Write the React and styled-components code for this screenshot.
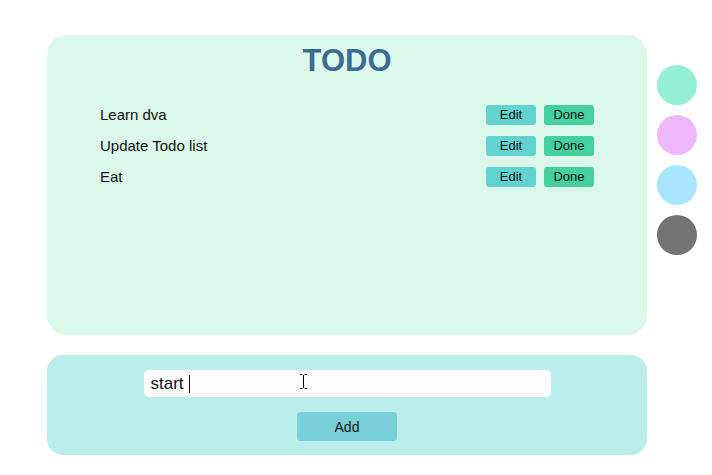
import React from "react";
import styled, { createGlobalStyle } from "styled-components";

const Global = createGlobalStyle`
  html, body { margin: 0; padding: 0; background: #ffffff; }
  body { font-family: "Liberation Sans", Arial, sans-serif; color: #111; }
`;

const Page = styled.div`
  display: flex;
  align-items: flex-start;
  padding: 35px 0 0 47px;
  gap: 10px;
`;

const Main = styled.div`
  display: flex;
  flex-direction: column;
  gap: 20px;
  width: 600px;
`;

const TodoPanel = styled.section`
  box-sizing: border-box;
  height: 300px;
  background: #dcf8eb;
  border-radius: 20px;
  padding: 6px 53px 0;
`;

const Title = styled.h1`
  margin: 0;
  text-align: center;
  font-size: 31px;
  line-height: 40px;
  font-weight: 700;
  color: #3d6a91;
`;

const List = styled.ul`
  list-style: none;
  margin: 18px 0 0;
  padding: 0;
`;

const Row = styled.li`
  display: flex;
  align-items: center;
  height: 31px;
  font-size: 15px;
`;

const Label = styled.span`
  flex: 1;
`;

const Actions = styled.div`
  display: flex;
  gap: 8px;
`;

const SmallButton = styled.button`
  width: 50px;
  height: 20px;
  border: none;
  border-radius: 3px;
  padding: 0;
  font-family: "Liberation Sans", Arial, sans-serif;
  font-size: 13px;
  color: #111;
  background: ${(p) => (p.$kind === "done" ? "#45d09e" : "#62d3cf")};
`;

const InputPanel = styled.section`
  box-sizing: border-box;
  height: 100px;
  background: #bbedea;
  border-radius: 16px;
  padding-top: 15px;
  display: flex;
  flex-direction: column;
  align-items: center;
  gap: 15px;
`;

const Field = styled.div`
  position: relative;
  box-sizing: border-box;
  width: 407px;
  height: 27px;
  background: #ffffff;
  border-radius: 5px;
  padding-left: 7px;
  display: flex;
  align-items: center;
  font-size: 17px;
  color: #111;
`;

const Caret = styled.span`
  display: inline-block;
  width: 1px;
  height: 18px;
  background: #111;
  margin-left: 5px;
`;

const Pointer = styled.svg`
  position: absolute;
  left: 155px;
  top: 3px;
`;

const AddButton = styled.button`
  width: 100px;
  height: 29px;
  border: none;
  border-radius: 4px;
  background: #79d0da;
  font-family: "Liberation Sans", Arial, sans-serif;
  font-size: 14px;
  color: #111;
  padding: 0;
`;

const Swatches = styled.div`
  display: flex;
  flex-direction: column;
  gap: 10px;
  margin-top: 30px;
`;

const Swatch = styled.div`
  width: 40px;
  height: 40px;
  border-radius: 50%;
  background: ${(p) => p.$color};
`;

const todos = ["Learn dva", "Update Todo list", "Eat"];
const colors = ["#95efd2", "#edb8fc", "#a9e6fd", "#737373"];

export default function App() {
  return (
    <>
      <Global />
      <Page>
        <Main>
          <TodoPanel>
            <Title>TODO</Title>
            <List>
              {todos.map((t) => (
                <Row key={t}>
                  <Label>{t}</Label>
                  <Actions>
                    <SmallButton>Edit</SmallButton>
                    <SmallButton $kind="done">Done</SmallButton>
                  </Actions>
                </Row>
              ))}
            </List>
          </TodoPanel>
          <InputPanel>
            <Field>
              start
              <Caret />
              <Pointer width="9" height="17" viewBox="0 0 9 17">
                <path d="M1 1.5h2.5M5.5 1.5H8M4.5 2v13M1 15.5h2.5M5.5 15.5H8" stroke="#000" strokeWidth="1" fill="none" />
              </Pointer>
            </Field>
            <AddButton>Add</AddButton>
          </InputPanel>
        </Main>
        <Swatches>
          {colors.map((c) => (
            <Swatch key={c} $color={c} />
          ))}
        </Swatches>
      </Page>
    </>
  );
}
